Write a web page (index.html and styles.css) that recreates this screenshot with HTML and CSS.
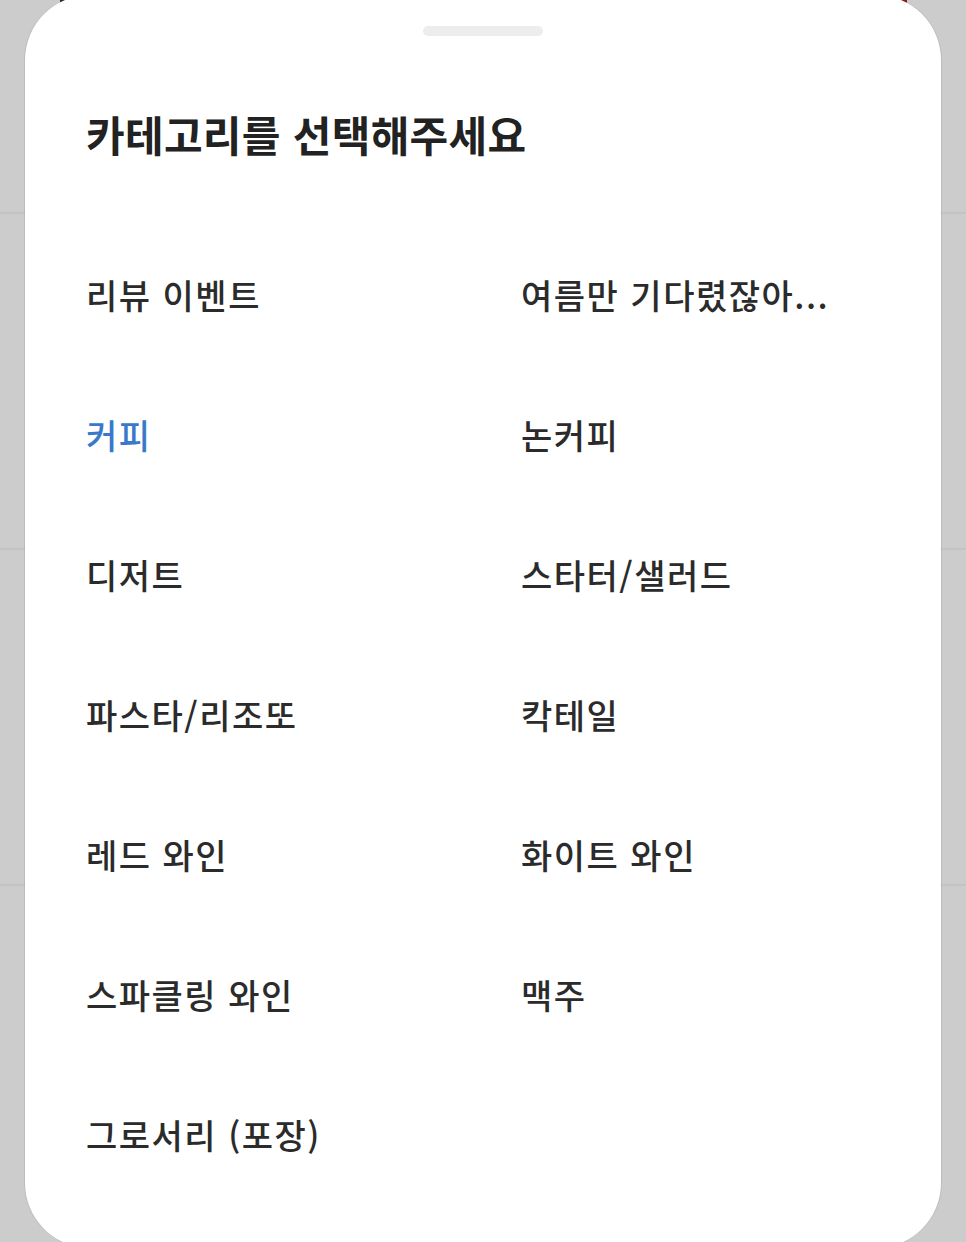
FILE: index.html
```html
<!DOCTYPE html>
<html lang="ko">
<head>
<meta charset="utf-8">
<title>카테고리 선택</title>
<link rel="stylesheet" href="styles.css">
</head>
<body>
<div class="backdrop">
  <span class="peek peek-left"></span>
  <span class="peek peek-right"></span>
</div>
<section class="sheet">
  <div class="handle"></div>
  <h1 class="title">카테고리를 선택해주세요</h1>
  <ul class="categories">
    <li class="cat">리뷰 이벤트</li>
    <li class="cat">여름만 기다렸잖아...</li>
    <li class="cat active">커피</li>
    <li class="cat">논커피</li>
    <li class="cat">디저트</li>
    <li class="cat">스타터/샐러드</li>
    <li class="cat">파스타/리조또</li>
    <li class="cat">칵테일</li>
    <li class="cat">레드 와인</li>
    <li class="cat">화이트 와인</li>
    <li class="cat">스파클링 와인</li>
    <li class="cat">맥주</li>
    <li class="cat">그로서리 (포장)</li>
  </ul>
</section>
</body>
</html>
```
FILE: styles.css
```css
html, body {
  margin: 0;
  padding: 0;
}
body {
  width: 966px;
  height: 1242px;
  overflow: hidden;
  background-color: #cccccc;
  background-image: repeating-linear-gradient(to bottom, transparent 0 334px, #c3c3c3 334px 336px);
  background-position: 0 -122px;
  font-family: "Noto Sans CJK KR", "Noto Sans", sans-serif;
  position: relative;
}
.backdrop {
  position: absolute;
  inset: 0;
  z-index: 0;
}
.peek {
  position: absolute;
  top: 0;
  height: 6px;
}
.peek-left {
  left: 60px;
  width: 14px;
  height: 3px;
  background: #2a2a2a;
}
.peek-right {
  left: 893px;
  width: 14px;
  background: #8a1c14;
}
.sheet {
  position: relative;
  z-index: 1;
  box-sizing: border-box;
  width: 916px;
  height: 1253px;
  margin: -5px 0 0 25px;
  background: #ffffff;
  border-radius: 65px;
  box-shadow: -1px 0 0 rgba(0,0,0,0.08), 1px 0 0 rgba(0,0,0,0.08);
  padding: 31px 0 0 61px;
}
.handle {
  width: 120px;
  height: 10px;
  border-radius: 5px;
  background: #ededed;
  margin-left: 337px;
}
.title {
  margin: 77px 0 0;
  height: 42px;
  line-height: 42px;
  font-size: 42px;
  font-weight: 700;
  color: #222222;
  letter-spacing: 0.3px;
}
.categories {
  list-style: none;
  margin: 70px 0 0;
  padding: 0;
  display: grid;
  grid-template-columns: 435px 1fr;
  grid-auto-rows: 140px;
}
.cat {
  display: flex;
  align-items: center;
  font-size: 34px;
  line-height: 34px;
  font-weight: 500;
  letter-spacing: 1.5px;
  color: #2b2b2b;
  white-space: nowrap;
}
.cat.active {
  color: #3a78c9;
}
```
